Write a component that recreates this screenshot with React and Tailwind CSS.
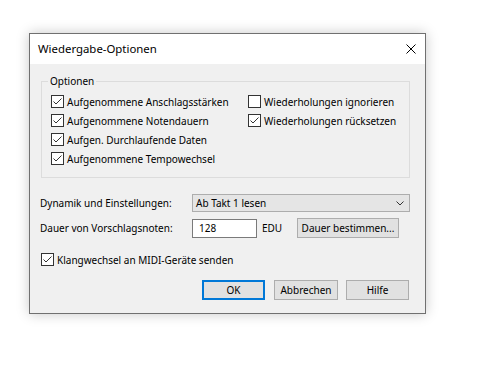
import { useState } from 'react'

const font = { fontFamily: '"Noto Sans", "Liberation Sans", sans-serif' }

const CheckBox = ({ label, checked, onChange }) => (
  <label className="flex items-center gap-[3px] h-[19px] text-[10px] text-black cursor-default select-none whitespace-nowrap">
    <span className="w-[13px] h-[13px] border border-[#333333] bg-white flex items-center justify-center shrink-0">
      {checked && (
        <svg width="11" height="11" viewBox="0 0 11 11">
          <polyline points="1.5,5.5 4,8 9.5,2.5" fill="none" stroke="#333333" strokeWidth="1" />
        </svg>
      )}
    </span>
    <input type="checkbox" className="hidden" checked={checked} onChange={onChange} />
    <span className="leading-none">{label}</span>
  </label>
)

const WinButton = ({ children, primary, width = 'w-[63px]' }) => (
  <button
    className={`${width} h-[20px] bg-[#e1e1e1] text-[10px] text-black leading-none flex items-center justify-center whitespace-nowrap ${
      primary ? 'border-2 border-[#0078d7]' : 'border border-[#adadad]'
    }`}
  >
    {children}
  </button>
)

export default function App() {
  const [opts, setOpts] = useState({
    velocity: true,
    durations: true,
    continuous: true,
    tempo: true,
    ignoreRepeats: false,
    resetRepeats: true,
    patch: true,
  })
  const toggle = (k) => () => setOpts((o) => ({ ...o, [k]: !o[k] }))

  return (
    <div className="w-[483px] h-[366px] bg-white pt-[33px] pl-[29px]" style={font}>
      <div className="w-[397px] h-[281px] border border-[#707070] bg-[#f0f0f0] flex flex-col shadow-[0_0_12px_rgba(0,0,0,0.22)]">
        {/* Title bar */}
        <div className="h-[30px] bg-white flex items-center justify-between pl-[8px] pr-[9px] shrink-0">
          <span className="text-[11.4px] text-black">Wiedergabe-Optionen</span>
          <svg width="10" height="10" viewBox="0 0 10 10">
            <path d="M0.5 0.5 L9.5 9.5 M9.5 0.5 L0.5 9.5" stroke="#000" strokeWidth="1" />
          </svg>
        </div>

        {/* Optionen group */}
        <div className="relative mt-[17px] ml-[11px] w-[369px] h-[97px] border border-[#dcdcdc] pt-[10px] pl-[9px] flex">
          <span className="absolute left-[6px] top-[-8px] px-[2px] bg-[#f0f0f0] text-[10px] text-black leading-[14px]">
            Optionen
          </span>
          <div className="w-[197px] flex flex-col">
            <CheckBox label="Aufgenommene Anschlagsstärken" checked={opts.velocity} onChange={toggle('velocity')} />
            <CheckBox label="Aufgenommene Notendauern" checked={opts.durations} onChange={toggle('durations')} />
            <CheckBox label="Aufgen. Durchlaufende Daten" checked={opts.continuous} onChange={toggle('continuous')} />
            <CheckBox label="Aufgenommene Tempowechsel" checked={opts.tempo} onChange={toggle('tempo')} />
          </div>
          <div className="flex flex-col">
            <CheckBox label="Wiederholungen ignorieren" checked={opts.ignoreRepeats} onChange={toggle('ignoreRepeats')} />
            <CheckBox label="Wiederholungen rücksetzen" checked={opts.resetRepeats} onChange={toggle('resetRepeats')} />
          </div>
        </div>

        {/* Dynamik row */}
        <div className="mt-[16px] ml-[10px] flex items-center h-[18px]">
          <span className="w-[152px] text-[10px] text-black whitespace-nowrap">Dynamik und Einstellungen:</span>
          <div className="w-[218px] h-[18px] bg-[#e5e5e5] border border-[#adadad] flex items-center justify-between pl-[3px] pr-[5px]">
            <span className="text-[10px] text-black leading-none">Ab Takt 1 lesen</span>
            <svg width="8" height="5" viewBox="0 0 8 5">
              <polyline points="0.5,0.5 4,4 7.5,0.5" fill="none" stroke="#333" strokeWidth="1" />
            </svg>
          </div>
        </div>

        {/* Vorschlagsnoten row */}
        <div className="mt-[6px] ml-[10px] flex items-center h-[20px]">
          <span className="w-[152px] text-[10px] text-black whitespace-nowrap">Dauer von Vorschlagsnoten:</span>
          <div className="w-[65px] h-[19px] bg-white border border-[#7a7a7a] flex items-center pl-[6px]">
            <span className="text-[10px] text-black leading-none">128</span>
          </div>
          <span className="ml-[5px] w-[35px] text-[10px] text-black">EDU</span>
          <button className="w-[102px] h-[20px] bg-[#e1e1e1] border border-[#adadad] text-[10px] text-black leading-none whitespace-nowrap">
            Dauer bestimmen...
          </button>
        </div>

        {/* MIDI checkbox */}
        <div className="mt-[12px] ml-[11px]">
          <CheckBox label="Klangwechsel an MIDI-Geräte senden" checked={opts.patch} onChange={toggle('patch')} />
        </div>

        {/* Buttons */}
        <div className="mt-[11px] pr-[16px] flex justify-end">
          <WinButton primary>OK</WinButton>
          <div className="ml-[9px]">
            <WinButton width="w-[64px]">Abbrechen</WinButton>
          </div>
          <div className="ml-[8px]">
            <WinButton>Hilfe</WinButton>
          </div>
        </div>
      </div>
    </div>
  )
}
